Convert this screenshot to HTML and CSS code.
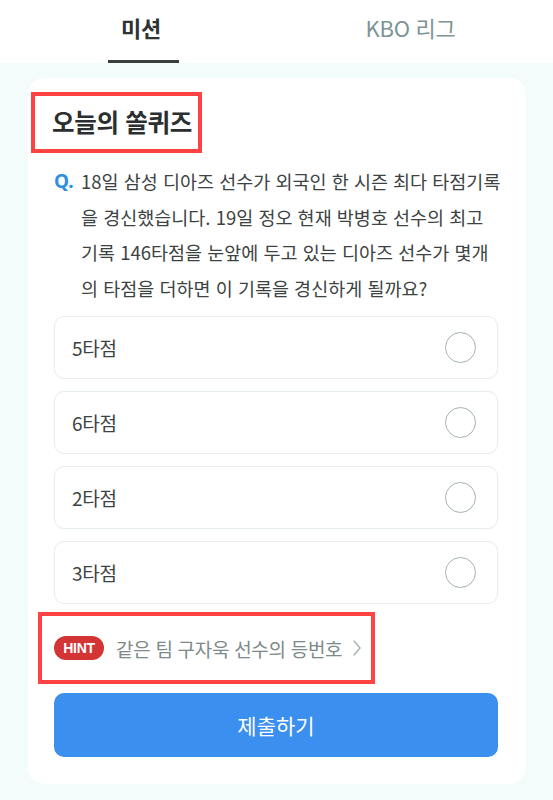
FILE: index.html
```html
<!DOCTYPE html>
<html lang="ko">

<head>
    <meta charset="UTF-8">
    <title>오늘의 쏠퀴즈</title>
    <link rel="stylesheet" href="styles.css">
</head>

<body>
    <nav class="tabs">
        <a class="tab tab-on" href="#">미션</a>
        <a class="tab" href="#">KBO 리그</a>
    </nav>

    <main class="page">
        <section class="card">
            <h1 class="title">오늘의 쏠퀴즈</h1>

            <div class="question">
                <span class="qmark">Q.</span>
                <p class="qtext">
                    <span>18일 삼성 디아즈 선수가 외국인 한 시즌 최다 타점기록</span>
                    <span>을 경신했습니다. 19일 정오 현재 박병호 선수의 최고</span>
                    <span>기록 146타점을 눈앞에 두고 있는 디아즈 선수가 몇개</span>
                    <span>의 타점을 더하면 이 기록을 경신하게 될까요?</span>
                </p>
            </div>

            <ul class="options">
                <li class="option"><span>5타점</span><i class="radio"></i></li>
                <li class="option"><span>6타점</span><i class="radio"></i></li>
                <li class="option"><span>2타점</span><i class="radio"></i></li>
                <li class="option"><span>3타점</span><i class="radio"></i></li>
            </ul>

            <div class="hint">
                <span class="badge">HINT</span>
                <span class="hint-text">같은 팀 구자욱 선수의 등번호</span>
                <svg class="chev" width="10" height="18" viewBox="0 0 10 18">
                    <path d="M2 2 L8 9 L2 16" fill="none" stroke="#a9b4b4" stroke-width="1.5" stroke-linecap="round" stroke-linejoin="round" />
                </svg>
            </div>

            <button class="submit">제출하기</button>
        </section>
    </main>
</body>

</html>
```

FILE: styles.css
```css
* {
    box-sizing: border-box;
}

body {
    margin: 0;
    background-color: #f4fbfb;
    font-family: "Noto Sans CJK KR", "Noto Sans", sans-serif;
    color: #333939;
}

.tabs {
    display: flex;
    height: 63px;
    padding-right: 14px;
    background-color: #fff;
}

.tab {
    flex: 1;
    display: flex;
    justify-content: center;
    padding-top: 11px;
    font-size: 22px;
    color: #7c9494;
    text-decoration: none;
    letter-spacing: -0.3px;
}

.tab-on {
    flex: 0 0 282px;
    color: #2e3333;
    font-weight: bold;
    position: relative;
}

/* 选中标签下面的黑线 */
.tab-on::after {
    content: '';
    position: absolute;
    left: 108px;
    bottom: 0;
    width: 71px;
    height: 3px;
    background-color: #3a3f3f;
}

.page {
    padding: 15px 27px 16px 28px;
}

.card {
    background-color: #fff;
    border-radius: 16px;
    padding: 14px 28px 27px 26px;
}

.title {
    display: inline-block;
    margin: 0 0 0 -23px;
    padding: 8px 6px 9px 17px;
    border: 4px solid #ff4343;
    font-size: 24.5px;
    line-height: 36px;
    font-weight: bold;
    color: #2b2f2f;
    letter-spacing: -0.3px;
}

.question {
    display: flex;
    margin-top: 11px;
}

.qmark {
    flex: 0 0 27px;
    font-size: 19px;
    line-height: 35.5px;
    font-weight: bold;
    color: #2f8fe0;
    font-family: "Noto Sans", sans-serif;
}

.qtext {
    margin: 0;
    font-size: 18.5px;
    line-height: 35.5px;
    color: #3d4343;
    white-space: nowrap;
}

.qtext span {
    display: block;
}

.options {
    list-style: none;
    margin: 10px 0 0;
    padding: 0;
    display: flex;
    flex-direction: column;
    gap: 12px;
}

.option {
    height: 63px;
    border: 1px solid #e5eded;
    border-radius: 10px;
    display: flex;
    align-items: center;
    justify-content: space-between;
    padding: 0 21px 0 17px;
    font-size: 19px;
    color: #3d4343;
    letter-spacing: -0.3px;
}

.radio {
    width: 31px;
    height: 31px;
    border: 1.5px solid #a5b3b3;
    border-radius: 50%;
}

.hint {
    display: inline-flex;
    align-items: center;
    height: 72px;
    margin: 8px 0 0 -16px;
    padding: 0 9px 0 12px;
    border: 4px solid #ff4343;
}

.badge {
    width: 50px;
    height: 24px;
    border-radius: 12px;
    background-color: #d33535;
    color: #fff;
    font-family: "Liberation Sans", sans-serif;
    font-weight: bold;
    font-size: 14px;
    line-height: 24px;
    text-align: center;
    letter-spacing: -0.3px;
}

.hint-text {
    margin-left: 12px;
    font-size: 19px;
    color: #7d8a8a;
    letter-spacing: -0.3px;
}

.chev {
    margin-left: 10px;
}

.submit {
    display: block;
    width: 100%;
    height: 64px;
    margin-top: 9px;
    border: none;
    border-radius: 10px;
    background-color: #3b8fee;
    color: #fff;
    font-family: inherit;
    font-size: 21px;
}
```
